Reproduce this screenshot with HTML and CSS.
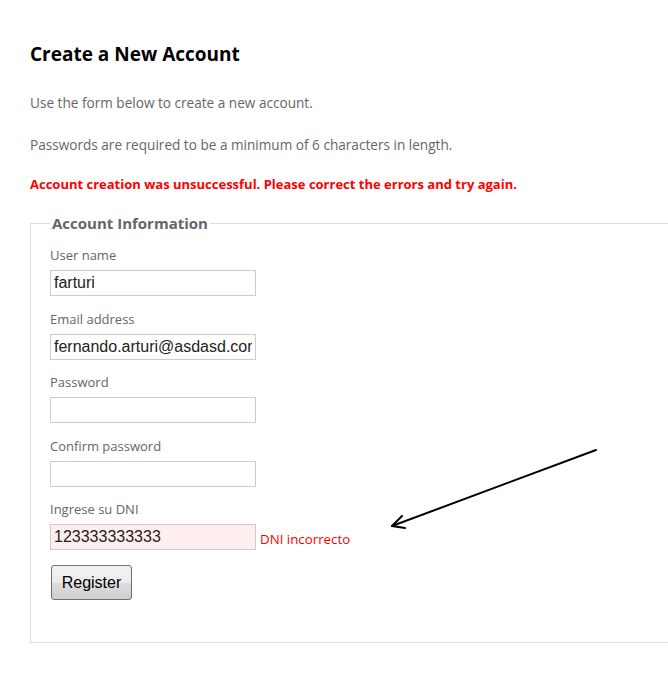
FILE: index.html
```html
<!DOCTYPE html>
<html lang="en">
<head>
<meta charset="UTF-8">
<title>Create a New Account</title>
<link rel="stylesheet" href="styles.css">
</head>
<body>
<div class="page">
  <h2 class="title">Create a New Account</h2>
  <p class="note first">Use the form below to create a new account.</p>
  <p class="note">Passwords are required to be a minimum of 6 characters in length.</p>
  <p class="failure">Account creation was unsuccessful. Please correct the errors and try again.</p>

  <fieldset class="account">
    <legend>Account Information</legend>
    <div class="field">
      <label for="user">User name</label>
      <input id="user" type="text" value="farturi">
    </div>
    <div class="field">
      <label for="email">Email address</label>
      <input id="email" type="text" value="fernando.arturi@asdasd.com">
    </div>
    <div class="field">
      <label for="pass">Password</label>
      <input id="pass" type="password">
    </div>
    <div class="field">
      <label for="confirm">Confirm password</label>
      <input id="confirm" type="password">
    </div>
    <div class="field">
      <label for="dni">Ingrese su DNI</label>
      <div class="row">
        <input id="dni" class="invalid" type="text" value="123333333333">
        <span class="field-error">DNI incorrecto</span>
      </div>
    </div>
    <button class="submit" type="button">Register</button>
  </fieldset>
</div>

<!-- hand drawn annotation arrow -->
<svg class="arrow" width="668" height="681" viewBox="0 0 668 681">
  <g fill="none" stroke="#000" stroke-width="2" stroke-linecap="round">
    <path d="M596 450 L392 526"/>
    <path d="M392 526 L402 516 M392 526 L405 528"/>
  </g>
</svg>
</body>
</html>
```

FILE: styles.css
```css
html, body {
  margin: 0;
  background: #fff;
  overflow: hidden;
}

body {
  font-family: "Open Sans", sans-serif;
  color: #666;
  height: 681px;
}

.page {
  padding: 0 0 0 30px;
}

.title {
  margin: 42px 0 0;
  font-size: 19px;
  line-height: 24px;
  color: #000;
  font-weight: bold;
}

.note {
  margin: 24px 0 0;
  font-size: 13.6px;
  line-height: 18px;
}

.note.first {
  margin-top: 28px;
}

.failure {
  margin: 21px 0 0;
  font-size: 13px;
  line-height: 18px;
  font-weight: bold;
  color: #f00;
}

.account {
  margin: 20px 0 0;
  padding: 13px 19px 42px;
  border: 1px solid #ddd;
  border-right: none;
}

.account legend {
  padding: 0 2px;
  font-size: 15px;
  line-height: 20px;
  font-weight: bold;
  color: #666;
}

.field {
  margin-bottom: 13.5px;
}

.field label {
  display: block;
  font-size: 13px;
  line-height: 18px;
  margin-bottom: 6px;
}

.row {
  display: flex;
  align-items: center;
}

.field input {
  box-sizing: border-box;
  width: 206px;
  height: 26px;
  margin: 0;
  padding: 0 3px;
  border: 1px solid #ccc;
  font-family: "Liberation Sans", Arial, sans-serif;
  font-size: 16px;
  color: #222;
  background: #fff;
}

.field input.invalid {
  background: #fee;
}

.field-error {
  margin-left: 4px;
  padding-top: 3px;
  font-size: 13.3px;
  color: #f00;
}

.submit {
  display: block;
  margin: 15px 0 0 1px;
  width: 81px;
  height: 35px;
  padding: 0;
  border: 1px solid #707070;
  border-radius: 3px;
  background: linear-gradient(#f2f2f2 0%, #ebebeb 50%, #dddddd 51%, #cfcfcf 100%);
  font-family: "Liberation Sans", Arial, sans-serif;
  font-size: 16px;
  color: #000;
}

.arrow {
  position: absolute;
  left: 0;
  top: 0;
  pointer-events: none;
}
```
